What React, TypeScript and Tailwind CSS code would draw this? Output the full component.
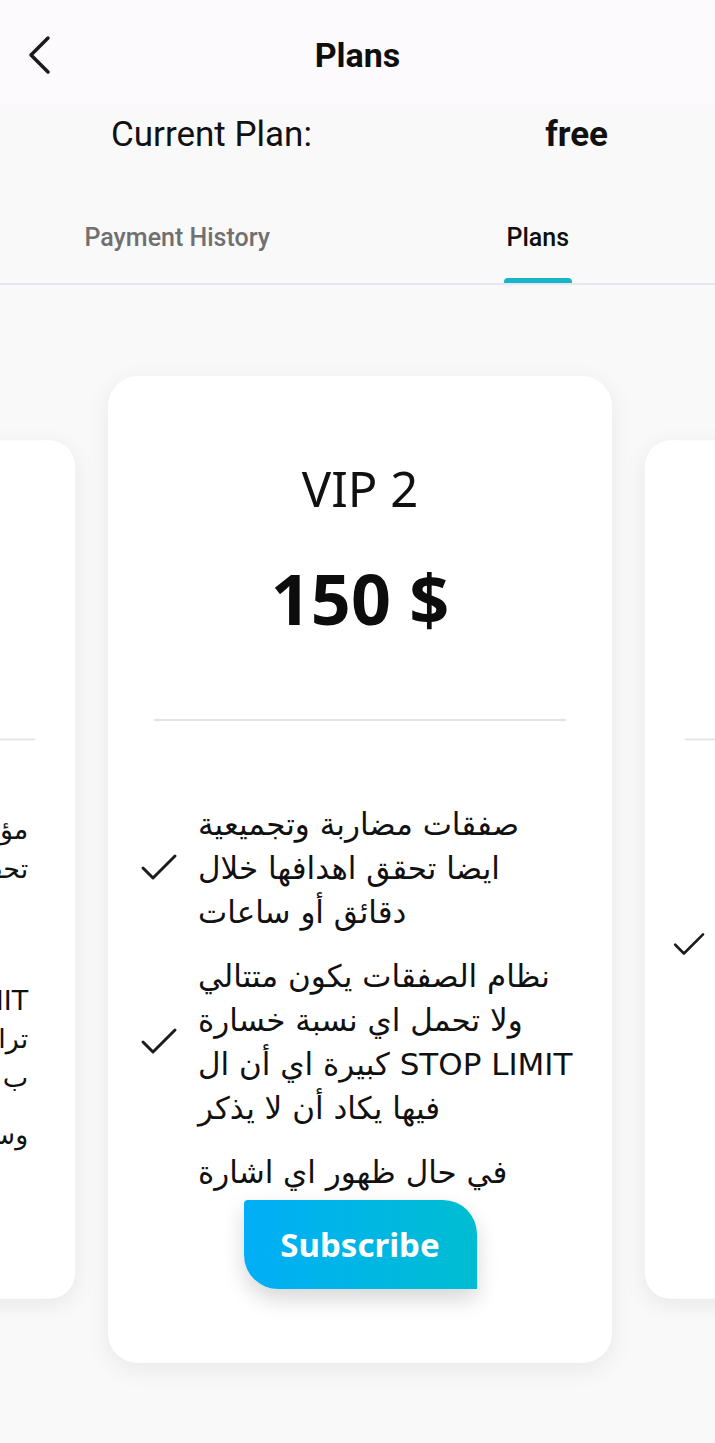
import { Check } from "lucide-react";
import clsx from "clsx";

type Line = { t: string; short?: boolean };
type Plan = { title: string; price: string; items: Line[][]; alignRight?: boolean };

const L = (t: string, short = false): Line => ({ t, short });

const plans: Plan[] = [
  {
    title: "VIP 1",
    price: "75 $",
    alignRight: true,
    items: [
      [L("مؤشرات فنية بدقة عالية"), L("تحقق أرباح يومية ثابتة"), L("خلال الأسبوع", true)],
      [L("صفقات آمنة", true), L("مع تحديد STOP LIMIT"), L("تراجع بسيط للصفقات"), L("ب 30 دقيقة فقط")],
      [L("وسطية ومناسبة للجميع")],
    ],
  },
  {
    title: "VIP 2",
    price: "150 $",
    items: [
      [L("صفقات مضاربة وتجميعية"), L("ايضا تحقق اهدافها خلال"), L("دقائق أو ساعات")],
      [L("نظام الصفقات يكون متتالي"), L("ولا تحمل اي نسبة خسارة"), L("كبيرة اي أن ال STOP LIMIT"), L("فيها يكاد أن لا يذكر")],
      [L("في حال ظهور اي اشارة"), L("قوية سيتم ارسالها مباشرة"), L("لجميع المشتركين")],
    ],
  },
  {
    title: "VIP 3",
    price: "300 $",
    items: [
      [
        L("جميع مزايا الباقات السابقة"),
        L("مع متابعة شخصية يومية"),
        L("وتحليل كامل للسوق"),
        L("وتوصيات طويلة المدى"),
        L("ودعم فني على مدار"),
        L("الساعة طوال أيام"),
        L("الأسبوع"),
      ],
      [L("صفقات حصرية"), L("للمشتركين فقط"), L("بدون أي خسارة"), L("تذكر")],
    ],
  },
];

const arabic = "font-['DejaVu_Sans',sans-serif]";

function PlanCard({ plan, side }: { plan: Plan; side?: boolean }) {
  return (
    <div
      className={clsx(
        "flex h-[987px] w-[504px] shrink-0 flex-col rounded-[30px] bg-white shadow-[0_6px_26px_rgba(0,0,0,0.07)]",
        side && "scale-[0.87]"
      )}
    >
      <div className="pt-[88px] text-center font-['Noto_Sans',sans-serif] text-[49px] leading-none text-[#111]">
        {plan.title}
      </div>
      <div className="mt-[50px] text-center font-['Noto_Sans',sans-serif] text-[70px] font-bold leading-none text-[#0d0d0d]">
        {plan.price}
      </div>
      <div className="mx-[46px] mt-[86px] h-[2px] bg-[#e3e3e3]" />
      <div className="mt-[81px] flex h-[397px] flex-col gap-5 overflow-hidden pl-[27px] pr-[40px]">
        {plan.items.map((lines, i) => (
          <div key={i} className="flex shrink-0 items-center gap-[15px]">
            <Check size={48} strokeWidth={1.5} className="shrink-0 text-[#1c1c1c]" />
            <div
              className={clsx(
                "flex-1 whitespace-nowrap text-[31px] leading-[44px] text-[#111]",
                plan.alignRight && "pr-[14px]",
                arabic
              )}
            >
              {lines.map((line, j) => (
                <div key={j} className={plan.alignRight && !line.short ? "text-right" : "text-left"}>
                  {line.t}
                </div>
              ))}
            </div>
          </div>
        ))}
      </div>
      <div className="mt-px flex justify-center">
        <button className="flex h-[89px] w-[233px] items-center justify-center rounded-tl-[4px] rounded-tr-[34px] rounded-bl-[34px] rounded-br-none bg-linear-to-r from-[#02aef7] to-[#00bdd1] font-['Noto_Sans',sans-serif] text-[33px] font-bold text-white shadow-[0_10px_22px_rgba(0,0,0,0.16)]">
          Subscribe
        </button>
      </div>
    </div>
  );
}

export default function App() {
  return (
    <div className="min-h-screen w-[715px] overflow-hidden bg-[#f9f9f9] font-['Roboto',sans-serif]">
      <header className="grid h-[105px] grid-cols-[1fr_auto_1fr] items-center bg-[#fdfafd] pt-[5px]">
        <div className="pl-[26px]">
          <svg width="26" height="40" viewBox="0 0 26 40" fill="none">
            <polyline
              points="22,3 5,20 22,37"
              stroke="#1a1a1a"
              strokeWidth="3.5"
              strokeLinecap="round"
              strokeLinejoin="round"
            />
          </svg>
        </div>
        <h1 className="text-[34px] font-bold text-[#0e0e0e]">Plans</h1>
        <div />
      </header>

      <div className="flex h-[90px] items-start justify-between pl-[111px] pr-[107px] pt-[12px] text-[35px] leading-none text-[#111]">
        <span>Current Plan:</span>
        <span className="font-bold">free</span>
      </div>

      <div className="flex border-b-2 border-[#e6e6ee] pt-[30px]">
        <div className="flex flex-1 flex-col items-center">
          <span className="text-[25px] font-medium leading-none text-[#707070]">Payment History</span>
          <div className="mt-[28px] h-[5px]" />
        </div>
        <div className="flex flex-1 flex-col items-center pl-[6px]">
          <span className="text-[25px] font-medium leading-none text-[#0f0f0f]">Plans</span>
          <div className="relative -mb-[2px] mt-[28px] h-[5px] w-[68px] rounded-t-[4px] bg-[#16b5c9]" />
        </div>
      </div>

      <div className="flex items-center justify-center overflow-hidden pb-[80px] pl-[5px] pt-[91px]">
        <PlanCard plan={plans[0]} side />
        <PlanCard plan={plans[1]} />
        <PlanCard plan={plans[2]} side />
      </div>
    </div>
  );
}
